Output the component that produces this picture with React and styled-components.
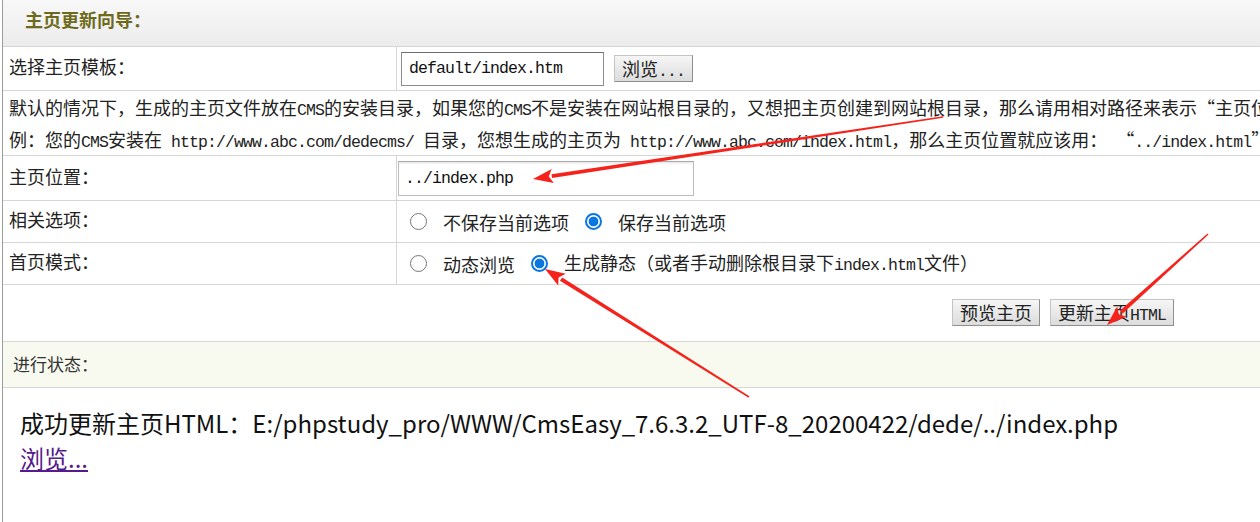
import React from 'react'
import styled, { createGlobalStyle } from 'styled-components'

const GlobalStyle = createGlobalStyle`
  html, body {
    margin: 0;
    padding: 0;
    background: #fff;
  }
  body {
    font-family: "Noto Sans CJK SC", sans-serif;
    color: #222;
  }
`

// page frame
const Page = styled.div`
  position: relative;
  width: 1260px;
  height: 522px;
  overflow: hidden;
  padding-left: 2px;
  box-sizing: border-box;
`

const Frame = styled.div`
  height: 100%;
  border-left: 1px solid #9c9c9c;
`

const Table = styled.div`
  width: 2120px;
  display: flex;
  flex-direction: column;
`

const Row = styled.div`
  display: flex;
  box-sizing: border-box;
  height: ${p => p.$h}px;
  border-bottom: 1px solid #d6d6d6;
  background: ${p => p.$bg || 'transparent'};
`

const HeadRow = styled(Row)`
  align-items: center;
  padding: 0 0 9px 22px;
  background: linear-gradient(#f8f8f8, #ececec);
`

const Title = styled.b`
  font-size: 18px;
  color: #6d6a1c;
`

const Label = styled.div`
  width: 394px;
  flex: none;
  box-sizing: border-box;
  border-right: 1px solid #d6d6d6;
  display: flex;
  align-items: center;
  padding: 0 0 5px 6px;
  font-size: 18px;
`

const Field = styled.div`
  flex: 1;
  display: flex;
  align-items: center;
  gap: ${p => p.$gap || 0}px;
  padding-left: ${p => p.$pad ?? 4}px;
  font-size: 18px;
`

const Latin = styled.span`
  font-family: "Liberation Mono", monospace;
  font-size: 16.5px;
  letter-spacing: -0.9px;
`

const Desc = styled.div`
  padding: 2px 0 0 6px;
  font-size: 18px;
  line-height: 29px;
  white-space: nowrap;
`

const TextInput = styled.input`
  box-sizing: border-box;
  width: ${p => p.$w}px;
  height: ${p => p.$h}px;
  padding: 0 0 0 ${p => p.$pl}px;
  font-family: "Liberation Mono", monospace;
  font-size: 16.5px;
  letter-spacing: -0.9px;
  color: #111;
  background: #fff;
  border: 1px solid ${p => (p.$soft ? '#bdbdbd' : '#8c8c8c')};
  border-top-color: ${p => (p.$soft ? '#a9a9a9' : '#6e6e6e')};
  box-shadow: ${p => (p.$soft ? 'inset 0 3px 3px -2px rgba(0,0,0,0.12)' : 'none')};
  outline: none;
`

const Button = styled.button`
  box-sizing: border-box;
  height: 27px;
  padding: 0 7px;
  font-family: "Noto Sans CJK SC", sans-serif;
  font-size: 18px;
  line-height: 25px;
  color: #222;
  background: linear-gradient(#f6f6f6, #dcdcdc);
  border: 1px solid #c4c4c4;
  border-right-color: #8e8e8e;
  border-bottom-color: #8e8e8e;
  border-radius: 0;
  cursor: pointer;
`

const Options = styled.div`
  display: flex;
  align-items: center;
  gap: 7px;
`

const Option = styled.label`
  display: flex;
  align-items: center;
  white-space: nowrap;
`

const OptionText = styled.span`
  line-height: 26px;
`

const Radio = styled.span`
  width: 17px;
  height: 17px;
  margin: 0 16px 0 9px;
  box-sizing: border-box;
  border-radius: 50%;
  border: ${p => (p.$checked ? '2px solid #0a76e0' : '1.5px solid #767676')};
  background: ${p => (p.$checked ? 'radial-gradient(circle, #0a76e0 0 4.6px, #fff 5.2px)' : '#fff')};
`

const Actions = styled.div`
  flex: 1;
  display: flex;
  justify-content: center;
  align-items: center;
  gap: 10px;
  padding-bottom: 1px;
`

const Status = styled.div`
  display: flex;
  align-items: center;
  padding: 0 0 2px 10px;
  font-size: 17px;
  color: #333;
`

const Message = styled.div`
  padding: 17px 0 0 17px;
  font-size: 24px;
  line-height: 35px;
  color: #111;
  white-space: nowrap;
`

const Link = styled.a`
  color: #551a8b;
  text-decoration: underline;
`

const Marks = styled.svg`
  position: absolute;
  left: 0;
  top: 0;
  pointer-events: none;
`

// red annotation arrow, tapered shaft + head
const arrowPath = (x1, y1, x2, y2) => {
  const dx = x2 - x1
  const dy = y2 - y1
  const len = Math.hypot(dx, dy)
  const ux = dx / len
  const uy = dy / len
  const nx = -uy
  const ny = ux
  const bx = x2 - ux * 19
  const by = y2 - uy * 19
  const p = (x, y) => `${x.toFixed(1)},${y.toFixed(1)}`
  const shaft = `M${p(x1 + nx * 0.8, y1 + ny * 0.8)} L${p(bx + nx * 2, by + ny * 2)} L${p(bx - nx * 2, by - ny * 2)} L${p(x1 - nx * 0.8, y1 - ny * 0.8)} Z`
  const head = `M${p(x2, y2)} L${p(bx + nx * 7 - ux * 1, by + ny * 7 - uy * 1)} L${p(bx + ux * 3, by + uy * 3)} L${p(bx - nx * 7 - ux * 1, by - ny * 7 - uy * 1)} Z`
  return shaft + ' ' + head
}

const arrows = [
  [943, 117, 533, 179],
  [1208, 234, 1107, 325],
  [749, 397, 545, 269],
]

const App = () => {
  return (
    <Page>
      <GlobalStyle />
      <Frame>
        <Table>
          <HeadRow $h={47}>
            <Title>主页更新向导：</Title>
          </HeadRow>
          <Row $h={44}>
            <Label>选择主页模板：</Label>
            <Field $gap={10}>
              <TextInput $w={203} $h={34} $pl={7} defaultValue="default/index.htm" />
              <Button>浏览<Latin>...</Latin></Button>
            </Field>
          </Row>
          <Row $h={65}>
            <Desc>
              默认的情况下，生成的主页文件放在<Latin>CMS</Latin>的安装目录，如果您的<Latin>CMS</Latin>不是安装在网站根目录的，又想把主页创建到网站根目录，那么请用相对路径来表示“主页位置”。
              <br />
              例：您的<Latin>CMS</Latin>安装在<Latin> http://www.abc.com/dedecms/ </Latin>目录，您想生成的主页为<Latin> http://www.abc.com/index.html</Latin>，那么主页位置就应该用：<Latin> </Latin>“<Latin>../index.html</Latin>”
            </Desc>
          </Row>
          <Row $h={45}>
            <Label>主页位置：</Label>
            <Field $pad={1}>
              <TextInput $soft $w={296} $h={35} $pl={6} defaultValue="../index.php" />
            </Field>
          </Row>
          <Row $h={42}>
            <Label>相关选项：</Label>
            <Field>
              <Options>
                <Option><Radio /><OptionText>不保存当前选项</OptionText></Option>
                <Option><Radio $checked /><OptionText>保存当前选项</OptionText></Option>
              </Options>
            </Field>
          </Row>
          <Row $h={42}>
            <Label>首页模式：</Label>
            <Field>
              <Options>
                <Option><Radio /><OptionText>动态浏览</OptionText></Option>
                <Option>
                  <Radio $checked />
                  <OptionText>生成静态（或者手动删除根目录下<Latin>index.html</Latin>文件）</OptionText>
                </Option>
              </Options>
            </Field>
          </Row>
          <Row $h={57}>
            <Actions>
              <Button>预览主页</Button>
              <Button>更新主页<Latin>HTML</Latin></Button>
            </Actions>
          </Row>
          <Row $h={46} $bg="#f9faef">
            <Status>进行状态：</Status>
          </Row>
        </Table>
        <Message>
          成功更新主页HTML：E:/phpstudy_pro/WWW/CmsEasy_7.6.3.2_UTF-8_20200422/dede/../index.php
          <br />
          <Link href="#">浏览...</Link>
        </Message>
      </Frame>
      <Marks width="1260" height="522" viewBox="0 0 1260 522">
        {arrows.map((a, i) => (
          <path key={i} d={arrowPath(...a)} fill="#f5231b" />
        ))}
      </Marks>
    </Page>
  )
}

export default App
